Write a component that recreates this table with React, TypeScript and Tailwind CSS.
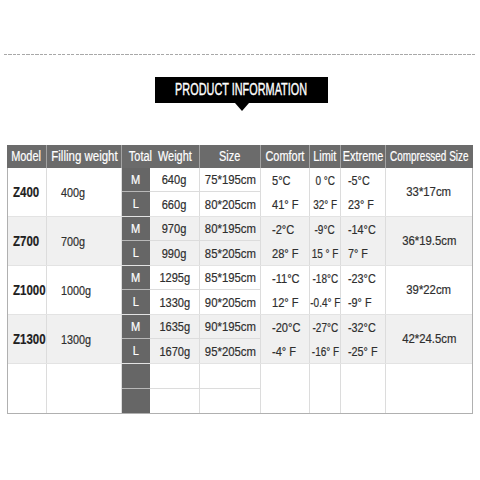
import React from "react";

type Row = [string, string, string, string, string, string];
type Group = { model: string; fill: string; rows: [Row, Row]; comp: string; gray: boolean };

const groups: Group[] = [
  {
    model: "Z400",
    fill: "400g",
    rows: [
      ["M", "640g", "75*195cm", "5°C", "0 °C", "-5°C"],
      ["L", "660g", "80*205cm", "41° F", "32° F", "23° F"],
    ],
    comp: "33*17cm",
    gray: false,
  },
  {
    model: "Z700",
    fill: "700g",
    rows: [
      ["M", "970g", "80*195cm", "-2°C", "-9°C", "-14°C"],
      ["L", "990g", "85*205cm", "28° F", "15 ° F", "7° F"],
    ],
    comp: "36*19.5cm",
    gray: true,
  },
  {
    model: "Z1000",
    fill: "1000g",
    rows: [
      ["M", "1295g", "85*195cm", "-11°C", "-18°C", "-23°C"],
      ["L", "1330g", "90*205cm", "12° F", "-0.4° F", "-9° F"],
    ],
    comp: "39*22cm",
    gray: false,
  },
  {
    model: "Z1300",
    fill: "1300g",
    rows: [
      ["M", "1635g", "90*195cm", "-20°C", "-27°C", "-32°C"],
      ["L", "1670g", "95*205cm", "-4° F", "-16° F", "-25° F"],
    ],
    comp: "42*24.5cm",
    gray: true,
  },
  {
    model: "",
    fill: "",
    rows: [
      ["", "", "", "", "", ""],
      ["", "", "", "", "", ""],
    ],
    comp: "",
    gray: false,
  },
];

function T({ children, cls = "scale-x-[0.82]" }: { children: React.ReactNode; cls?: string }) {
  return <span className={`inline-block whitespace-nowrap ${cls}`}>{children}</span>;
}

function Head({ w, children, last, cls }: { w: string; children: React.ReactNode; last?: boolean; cls?: string }) {
  return (
    <div className={`flex items-center justify-center ${w} ${last ? "" : "border-r border-[#a3a3a3]"}`}>
      <T cls={cls ?? "scale-x-[0.78]"}>{children}</T>
    </div>
  );
}

function SubRow({ r, first }: { r: Row; first: boolean }) {
  const line = first ? "border-b border-[#dcdcdc]" : "";
  return (
    <div className="flex h-1/2">
      <div
        className={`flex w-[28px] items-center justify-center bg-[#666666] pt-[1px] text-white ${
          first ? "border-b border-[#b8b8b8]" : ""
        }`}
      >
        <T>{r[0]}</T>
      </div>
      <div className={`flex w-[50px] items-center justify-center border-r border-r-[#dcdcdc] pt-[2px] ${line}`}>
        <T>{r[1]}</T>
      </div>
      <div className={`flex w-[61px] items-center justify-center border-r border-r-[#dcdcdc] pt-[2px] ${line}`}>
        <T cls="scale-x-[0.84]">{r[2]}</T>
      </div>
      <div className="flex w-[49px] items-center justify-start border-r border-[#dcdcdc] pl-[11px] pt-[2px]">
        <T cls="scale-x-[0.82] origin-left">{r[3]}</T>
      </div>
      <div className="flex w-[31px] items-center justify-center border-r border-[#dcdcdc] pt-[2px]">
        <T cls="scale-x-[0.74]">{r[4]}</T>
      </div>
      <div className="flex w-[45px] items-center justify-start border-r border-[#dcdcdc] pl-[7px] pt-[2px]">
        <T cls="scale-x-[0.8] origin-left">{r[5]}</T>
      </div>
    </div>
  );
}

export default function App() {
  return (
    <div className="h-[480px] w-[480px] overflow-hidden bg-white pt-[54px] font-['Liberation_Sans',Arial,sans-serif]">
      <div className="mx-[4px] h-px bg-[repeating-linear-gradient(90deg,#a8a8a8_0px,#a8a8a8_3px,transparent_3px,transparent_4.5px)]" />

      <div className="mt-[22px] flex justify-center pl-[3px]">
        <div className="relative flex h-[26px] w-[173px] items-center justify-center bg-black text-[17px] text-white [-webkit-text-stroke:0.4px_white]">
          <T cls="scale-x-[0.64]">PRODUCT INFORMATION</T>
          <div className="absolute left-1/2 top-full h-0 w-0 -translate-x-1/2 border-x-[7px] border-t-[8px] border-x-transparent border-t-black" />
        </div>
      </div>

      <div className="ml-[7px] mt-[42px] w-[466px] text-[13.5px] text-[#2e2e2e] [-webkit-text-stroke:0.2px_currentColor]">
        <div className="flex h-[23px] bg-[#6b6b6b] text-[14px] text-white">
          <Head w="w-[40px]">Model</Head>
          <Head w="w-[75px]" cls="scale-x-[0.82]">Filling weight</Head>
          <Head w="w-[78px]">Total&nbsp;&nbsp;Weight</Head>
          <Head w="w-[61px]">Size</Head>
          <Head w="w-[49px]">Comfort</Head>
          <Head w="w-[31px]">Limit</Head>
          <Head w="w-[45px]">Extreme</Head>
          <Head w="w-[87px]" last cls="scale-x-[0.71]">
            Compressed Size
          </Head>
        </div>
        <div className="border-x border-b border-[#b0b0b0]">
          {groups.map((g, i) => (
            <div
              key={i}
              className={`flex h-[49px] ${i < groups.length - 1 ? "border-b border-[#e3e3e3]" : ""} ${
                g.gray ? "bg-[#f0f0f0]" : "bg-white"
              }`}
            >
              <div className="flex w-[39px] items-center border-r border-[#dcdcdc] pl-[5px] pt-[1px] text-[14px] font-bold text-[#1e1e1e]">
                <T cls="scale-x-[0.82] origin-left">{g.model}</T>
              </div>
              <div className="flex w-[75px] items-center border-r border-[#dcdcdc] pl-[14px] pt-[3px]">
                <T cls="scale-x-[0.8] origin-left">{g.fill}</T>
              </div>
              <div className="flex w-[264px] flex-col">
                <SubRow r={g.rows[0]} first />
                <SubRow r={g.rows[1]} first={false} />
              </div>
              <div className="flex w-[86px] items-center justify-center">
                <T cls="scale-x-[0.84]">{g.comp}</T>
              </div>
            </div>
          ))}
        </div>
      </div>
    </div>
  );
}
